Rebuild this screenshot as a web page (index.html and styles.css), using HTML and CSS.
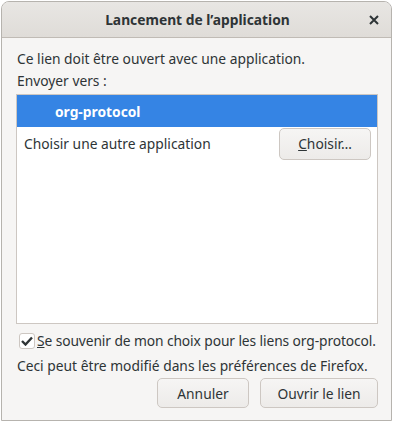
FILE: index.html
```html
<!DOCTYPE html>
<html>
<head>
    <title>Lancement de l'application</title>
    <link rel="stylesheet" href="styles.css">
</head>
<body>
    <div class="dialog">
        <div class="titlebar">
            <div class="title">Lancement de l’application</div>
            <div class="close">
                <svg width="10" height="10" viewBox="0 0 10 10"><path d="M1 1 L9 9 M9 1 L1 9" stroke="#2e3436" stroke-width="2"/></svg>
            </div>
        </div>
        <div class="content">
            <div class="intro">Ce lien doit être ouvert avec une application.</div>
            <div class="send-to">Envoyer vers :</div>
            <div class="app-list">
                <div class="app-row selected">org-protocol</div>
                <div class="app-row other">
                    <span>Choisir une autre application</span>
                    <button class="btn choose"><u>C</u>hoisir…</button>
                </div>
            </div>
            <label class="remember">
                <span class="check">
                    <svg width="12" height="10" viewBox="0 0 12 10"><path d="M1 5 L4.5 8.5 L11 1.5" fill="none" stroke="#2e3436" stroke-width="2.4"/></svg>
                </span>
                <span class="remember-text"><u>S</u>e souvenir de mon choix pour les liens org-protocol.</span>
            </label>
            <div class="note">Ceci peut être modifié dans les préférences de Firefox.</div>
            <div class="actions">
                <button class="btn cancel">Annuler</button>
                <button class="btn open">Ouvrir le lien</button>
            </div>
        </div>
    </div>
</body>
</html>
```

FILE: styles.css
```css
body {
    margin: 0;
    background: #ffffff;
    font-family: "Noto Sans", "DejaVu Sans", sans-serif;
    font-size: 13.8px;
    color: #2e3436;
}

.dialog {
    margin: 1px 1px 0 1px;
    height: 418px;
    border: 1px solid #b6b3ae;
    border-radius: 8px 8px 0 0;
    background: #f6f5f4;
    display: flex;
    flex-direction: column;
    overflow: hidden;
}

.titlebar {
    flex: none;
    height: 35px;
    background: linear-gradient(to bottom, #e8e6e3, #dfdcd8);
    border-bottom: 1px solid #c0bbb5;
    display: flex;
    align-items: center;
    justify-content: center;
    position: relative;
}

.title {
    font-weight: bold;
    font-size: 13.8px;
    margin-left: 2px;
}

.close {
    position: absolute;
    right: 12px;
    top: 13px;
    display: flex;
}

.content {
    padding: 10px 13px 0 14px;
    display: flex;
    flex-direction: column;
}

.intro {
    line-height: 22px;
    padding-left: 1px;
}

.send-to {
    line-height: 22px;
    padding-left: 1px;
}

.app-list {
    margin-top: 2px;
    height: 228px;
    background: #ffffff;
    border: 1px solid #cdc7c2;
}

.app-row {
    display: flex;
    align-items: center;
}

.app-row.selected {
    height: 32px;
    background: #3584e4;
    color: #ffffff;
    font-weight: bold;
    padding-left: 38px;
}

.app-row.other {
    height: 33px;
    justify-content: space-between;
    padding-left: 7px;
    padding-right: 6px;
}

.btn {
    font-family: inherit;
    font-size: 13.8px;
    color: #2e3436;
    background: linear-gradient(to bottom, #f6f5f4, #edebe9);
    border: 1px solid #cdc7c2;
    border-radius: 5px;
    padding: 0;
}

.btn u {
    text-decoration-thickness: 1px;
}

.choose {
    width: 92px;
    height: 32px;
}

.remember {
    display: flex;
    align-items: center;
    margin-top: 8px;
    padding-left: 3px;
    line-height: 18px;
}

.remember-text {
    white-space: nowrap;
    letter-spacing: -0.1px;
}

.check {
    flex: none;
    width: 14px;
    height: 14px;
    border: 1px solid #cdc7c2;
    border-radius: 3px;
    background: #ffffff;
    display: flex;
    align-items: center;
    justify-content: center;
    margin-right: 2px;
}

.note {
    margin-top: 6px;
    line-height: 20px;
    padding-left: 1px;
}

.actions {
    display: flex;
    justify-content: flex-end;
    gap: 11px;
    margin-top: 2px;
}

.cancel {
    width: 92px;
    height: 30px;
}

.open {
    width: 118px;
    height: 30px;
}
```
